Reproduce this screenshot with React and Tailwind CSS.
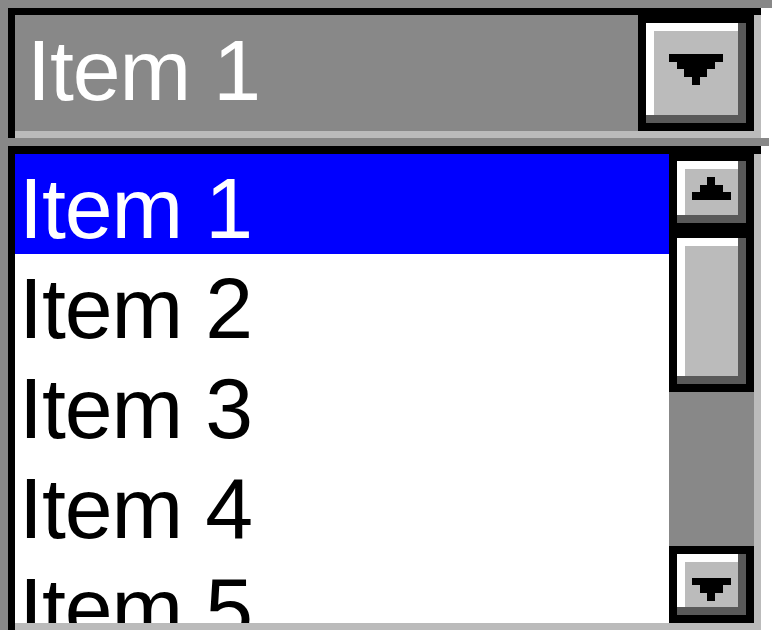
import React from "react";

const items = ["Item 1", "Item 2", "Item 3", "Item 4", "Item 5"];

// pixel-art arrows, drawn as stacked rects
const ArrowDownBig = () => (
  <svg width="84" height="84" className="block">
    <rect x="15" y="23" width="54" height="8" fill="#000" />
    <rect x="23" y="31" width="38" height="7" fill="#000" />
    <rect x="30" y="38" width="23" height="8" fill="#000" />
    <rect x="38" y="46" width="8" height="8" fill="#000" />
  </svg>
);

const ArrowUp = () => (
  <svg width="53" height="46" className="block">
    <rect x="22" y="8" width="8" height="8" fill="#000" />
    <rect x="15" y="16" width="23" height="7" fill="#000" />
    <rect x="7" y="23" width="39" height="8" fill="#000" />
  </svg>
);

const ArrowDown = () => (
  <svg width="53" height="46" className="block">
    <rect x="7" y="16" width="39" height="7" fill="#000" />
    <rect x="15" y="23" width="23" height="8" fill="#000" />
    <rect x="22" y="31" width="8" height="8" fill="#000" />
  </svg>
);

// raised 3d button: white top/left inside, dark bottom/right outside
const Bevel = ({ children, className = "" }) => (
  <div className={`border-b-[8px] border-r-[8px] border-[#595959] ${className}`}>
    <div className="h-full border-t-[8px] border-l-[8px] border-white bg-[#bbbbbb]">
      {children}
    </div>
  </div>
);

export default function App() {
  return (
    <div
      className="w-[772px] h-[639px] bg-white overflow-hidden"
      style={{ fontFamily: '"Liberation Sans", Arial, sans-serif' }}
    >
      <div className="h-[8px] bg-[#888888]" />
      <div className="flex">
        <div className="w-[8px] h-[622px] bg-[#888888]" />
        <div className="w-[753px] flex flex-col">
          {/* combo box */}
          <div className="h-[130px] border-t-[7px] border-l-[7px] border-black">
            <div className="h-full flex border-b-[7px] border-r-[7px] border-[#bbbbbb] bg-[#888888]">
              <div className="flex-1 pl-[12px] text-[86px] leading-[110px] tracking-[-1px] text-white whitespace-nowrap">
                Item 1
              </div>
              <div className="w-[116px] h-[116px] border-[8px] border-black">
                <Bevel className="h-[100px]">
                  <ArrowDownBig />
                </Bevel>
              </div>
            </div>
          </div>

          <div className="h-[8px] w-[761px] bg-[#888888]" />

          {/* list box */}
          <div className="h-[484px] border-t-[8px] border-l-[7px] border-black">
            <div className="h-full flex border-b-[7px] border-r-[7px] border-[#bbbbbb]">
              <div className="w-[654px] h-full overflow-hidden bg-white">
                {items.map((item, i) => (
                  <div
                    key={item}
                    className={`h-[100px] pt-[8px] pl-[4px] leading-[92px] text-[86px] tracking-[-1px] whitespace-nowrap ${
                      i === 0 ? "bg-[#0000ff] text-white" : "text-black"
                    }`}
                  >
                    {item}
                  </div>
                ))}
              </div>

              {/* scrollbar */}
              <div className="w-[85px] flex flex-col">
                <div className="bg-black px-[8px] pt-[7px] pb-[8px]">
                  <Bevel className="h-[62px]">
                    <ArrowUp />
                  </Bevel>
                  <div className="h-[15px]" />
                  <Bevel className="h-[146px]" />
                </div>
                <div className="flex-1 bg-[#888888]" />
                <div className="bg-black px-[8px] py-[8px]">
                  <Bevel className="h-[61px]">
                    <ArrowDown />
                  </Bevel>
                </div>
              </div>
            </div>
          </div>
        </div>
      </div>
    </div>
  );
}
